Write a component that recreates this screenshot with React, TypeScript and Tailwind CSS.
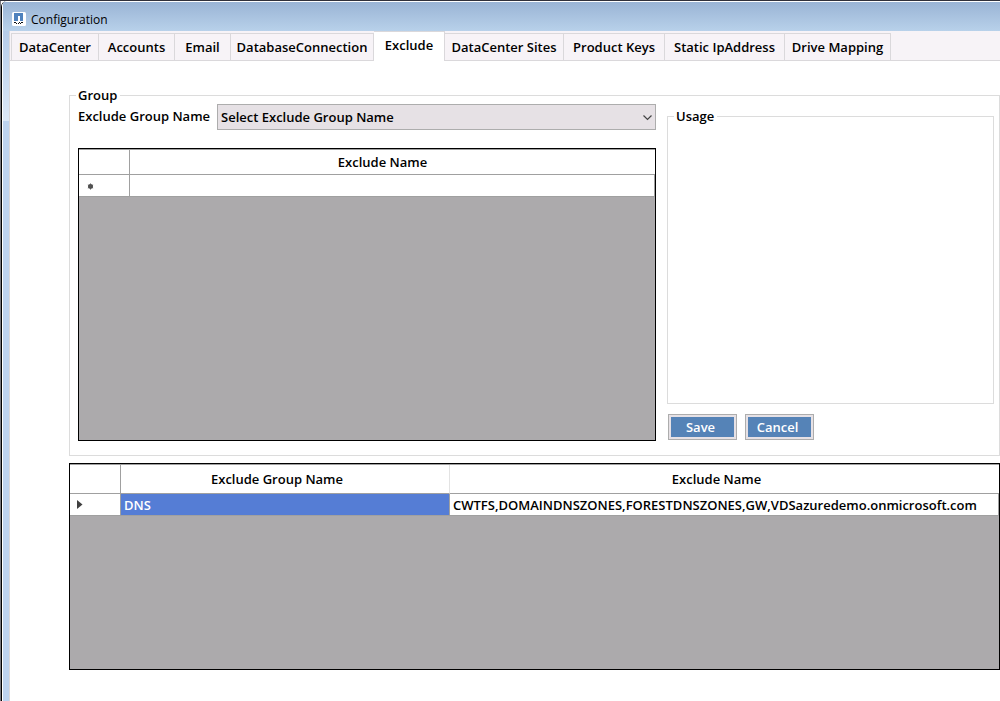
import { useState } from "react";

const tabs = [
  { name: "DataCenter", width: "w-[88px]" },
  { name: "Accounts", width: "w-[76px]" },
  { name: "Email", width: "w-[56px]" },
  { name: "DatabaseConnection", width: "w-[143px]" },
  { name: "Exclude", width: "w-[71px]" },
  { name: "DataCenter Sites", width: "w-[119px]" },
  { name: "Product Keys", width: "w-[101px]" },
  { name: "Static IpAddress", width: "w-[120px]" },
  { name: "Drive Mapping", width: "w-[106px]" },
];

function AppIcon() {
  return (
    <svg width="14" height="14" viewBox="0 0 14 14" aria-hidden="true">
      <rect width="14" height="14" rx="1.5" fill="#fff" />
      <g shapeRendering="crispEdges">
        <path d="M2 1h9v8H8V4H6v5H2z" fill="#4f82bd" />
        <path d="M2 10h2v1H2zM4 11h1v1H4zM6 11h1v1H6zM7 10h1v1H7zM9 10h2v1H9zM8 11h1v1H8z" fill="#111" />
      </g>
    </svg>
  );
}

function TabStrip() {
  const [active, setActive] = useState("Exclude");
  return (
    <div role="tablist" className="flex h-[30px] items-end bg-[#f7f3f7] pl-px shadow-[inset_0_-1px_0_#dad8db]">
      {tabs.map((tab, i) => (
        <button
          key={tab.name}
          type="button"
          role="tab"
          aria-selected={active === tab.name}
          onClick={() => setActive(tab.name)}
          className={
            active === tab.name
              ? `${tab.width} h-[30px] shrink-0 border-t border-r border-[#dad8db] bg-white pb-1 whitespace-nowrap`
              : `${tab.width} h-7 shrink-0 border-y border-r border-[#dad8db] whitespace-nowrap ${i === 0 ? "border-l" : ""}`
          }
        >
          {tab.name}
        </button>
      ))}
    </div>
  );
}

function ExcludeNameGrid() {
  return (
    <div className="h-[293px] border border-black bg-[#acaaac]">
      <table className="w-full table-fixed border-separate border-spacing-0 border-t border-[#a0a0a0] bg-white">
        <colgroup>
          <col className="w-[51px]" />
          <col />
        </colgroup>
        <thead>
          <tr className="h-[25px]">
            <th className="border-r border-b border-[#a0a0a0] p-0" />
            <th className="border-b border-[#a0a0a0] p-0 pr-5 font-semibold">Exclude Name</th>
          </tr>
        </thead>
        <tbody>
          <tr className="h-[22px]">
            <td className="border-r border-b border-[#a0a0a0] p-0 pt-0.5 pl-2">
              <svg width="7" height="7" viewBox="0 0 7 7" aria-hidden="true">
                <circle cx="3.5" cy="3.5" r="2.4" fill="#444" />
                <path d="M3.5 .5v6M.9 2l5.2 3M.9 5l5.2-3" stroke="#555" strokeWidth="1" />
              </svg>
            </td>
            <td className="border-r border-b border-[#a0a0a0] p-0">
              <input aria-label="Exclude Name" className="block h-5 w-full px-1 outline-none" />
            </td>
          </tr>
        </tbody>
      </table>
    </div>
  );
}

function GroupGrid() {
  return (
    <div className="h-[207px] border border-black bg-[#acaaac]">
      <table className="w-full table-fixed border-separate border-spacing-0 border-t border-[#a0a0a0] bg-white">
        <colgroup>
          <col className="w-[51px]" />
          <col className="w-[329px]" />
          <col />
        </colgroup>
        <thead>
          <tr className="h-[29px]">
            <th className="border-r border-b border-[#a0a0a0] p-0" />
            <th className="border-r border-b border-r-[#e3e3e3] border-b-[#a0a0a0] p-0 pr-4 font-semibold">Exclude Group Name</th>
            <th className="border-b border-[#a0a0a0] p-0 pr-4 font-semibold">Exclude Name</th>
          </tr>
        </thead>
        <tbody>
          <tr className="h-[22px]">
            <td className="border-r border-b border-[#a0a0a0] p-0 pl-[7px]">
              <svg width="6" height="9" viewBox="0 0 6 9" aria-hidden="true">
                <path d="M0 0v9l5.5-4.5z" fill="#404040" />
              </svg>
            </td>
            <td className="border-r border-b border-[#a0a0a0] bg-[#557dd5] p-0 pl-[3px] text-white">DNS</td>
            <td className="border-r border-b border-[#a0a0a0] p-0 pl-[3px] whitespace-nowrap">
              CWTFS,DOMAINDNSZONES,FORESTDNSZONES,GW,VDSazuredemo.onmicrosoft.com
            </td>
          </tr>
        </tbody>
      </table>
    </div>
  );
}

function PushButton({ label }: { label: string }) {
  return (
    <button type="button" className="flex h-[26px] w-[69px] border border-[#adadad] bg-[#e6e1e5] p-0.5">
      <span className="flex h-full w-full items-center justify-center bg-[#5583b7] pr-1 text-white">{label}</span>
    </button>
  );
}

export default function App() {
  return (
    <div className="flex min-h-screen flex-col border-t border-[#30303a] bg-white font-['Open_Sans','Liberation_Sans',sans-serif] text-[13px] leading-[18px] font-semibold text-black">
      <div className="flex grow border-l border-[#77777d]">
        <div className="flex grow overflow-hidden rounded-tl-md border-l border-black">
          <div className="flex min-w-0 grow flex-col border-t border-l border-white bg-[#bdd3ef]">
            <header className="flex h-[29px] items-center gap-[5px] bg-linear-to-b from-[#9ab4d5] to-[#b8d1ea] pt-[5px] pl-[9px]">
              <AppIcon />
              <h1 className="pt-px text-[12px] leading-4 font-normal">Configuration</h1>
            </header>
            <div className="flex grow">
              <div className="flex w-1.5 shrink-0 flex-col">
                <div className="h-[90px] bg-linear-to-b from-[#b5cce9] to-[#dce8f7]" />
                <div className="grow bg-[#bdd3ef]" />
              </div>
              <main className="flex min-w-0 grow flex-col border-l border-[#dad8db] bg-white">
                <TabStrip />
                <div className="flex flex-col gap-[7px] pt-[25px] pl-[59px]">
                  <fieldset className="grid min-w-0 grid-cols-[minmax(0,578fr)_minmax(0,327fr)] gap-x-[11px] border border-[#dcdcdc] pr-[5px] pb-[14px] pl-2">
                    <legend className="px-0 pr-[3px] shadow-[-2px_0_0_#fff]">Group</legend>
                    <div className="flex min-w-0 flex-col gap-[18px]">
                      <div className="flex">
                        <label htmlFor="group-name" className="w-[139px] shrink-0 pt-[3px]">
                          Exclude Group Name
                        </label>
                        <div className="relative h-[26px] grow">
                          <select
                            id="group-name"
                            className="h-full w-full appearance-none border border-[#adadad] bg-[#e6e1e5] pr-6 pl-[3px] outline-none"
                          >
                            <option>Select Exclude Group Name</option>
                          </select>
                          <svg
                            className="pointer-events-none absolute top-[11px] right-1"
                            width="9"
                            height="6"
                            viewBox="0 0 9 6"
                            fill="none"
                            stroke="#444"
                            strokeWidth="1.2"
                            aria-hidden="true"
                          >
                            <path d="M.5 .5l4 4 4-4" />
                          </svg>
                        </div>
                      </div>
                      <ExcludeNameGrid />
                    </div>
                    <div className="flex min-w-0 flex-col gap-2.5 pt-[3px]">
                      <fieldset className="h-[297px] min-w-0 border border-[#dcdcdc] pl-2">
                        <legend className="px-0 pr-[3px] shadow-[-2px_0_0_#fff]">Usage</legend>
                      </fieldset>
                      <div className="flex gap-2 pl-px">
                        <PushButton label="Save" />
                        <PushButton label="Cancel" />
                      </div>
                    </div>
                  </fieldset>
                  <GroupGrid />
                </div>
              </main>
            </div>
          </div>
        </div>
      </div>
    </div>
  );
}
